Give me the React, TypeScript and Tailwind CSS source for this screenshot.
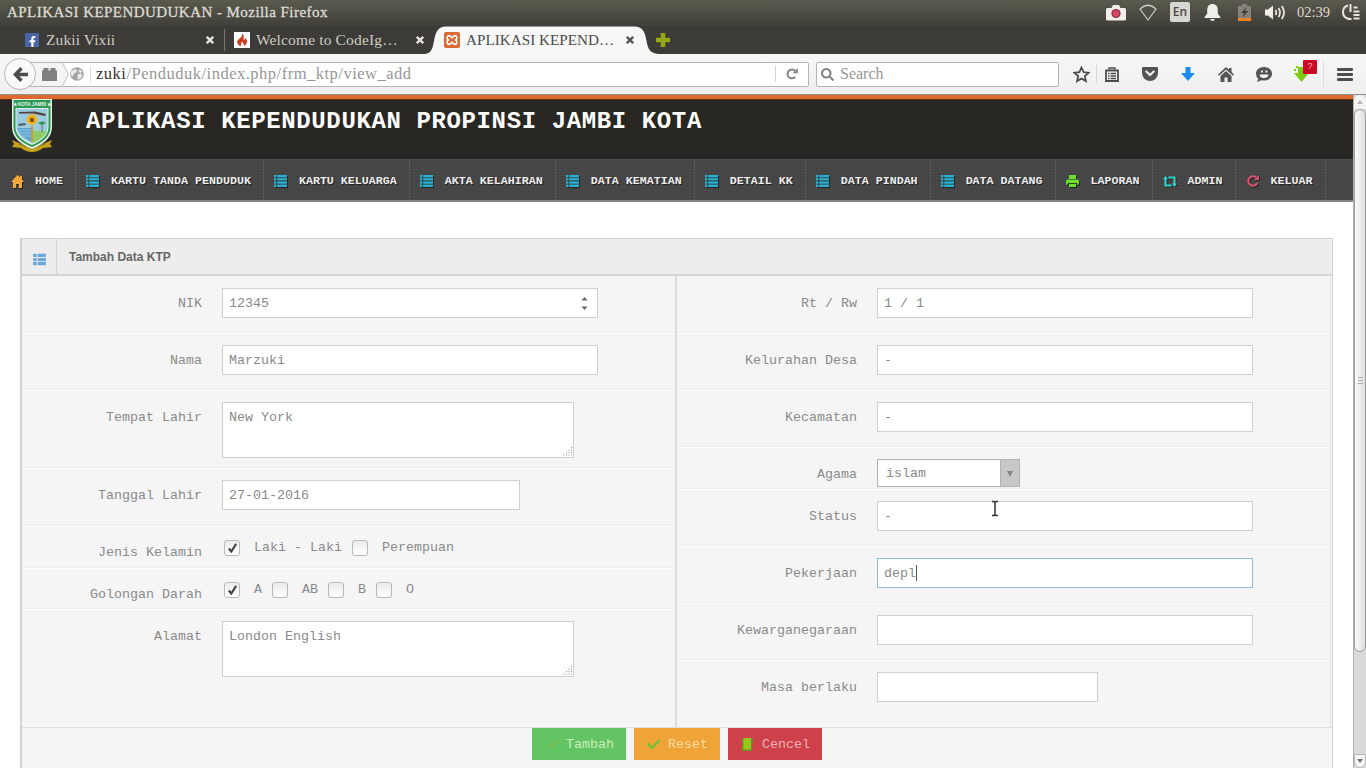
import type { ReactNode } from 'react';
import { FaThList, FaSearch, FaCheck, FaFacebookF } from 'react-icons/fa';

const serif = "font-['Liberation_Serif',serif]";

function CloseX({ className }: { className: string }) {
  return (
    <svg className={`h-[8px] w-[8px] shrink-0 ${className}`} viewBox="0 0 8 8" fill="none" stroke="currentColor" strokeWidth="2.3">
      <path d="M.8.8l6.4 6.4M7.2.8L.8 7.2" />
    </svg>
  );
}

function TitleBar() {
  return (
    <div className={`flex h-[26px] shrink-0 items-start bg-gradient-to-b from-[#5a5a4e] to-[#403f3a] pl-[7px] text-[#dfdbd2] ${serif}`}>
      <span className="text-[15px] leading-[24px] tracking-[0.45px] [-webkit-text-stroke:0.3px_#dfdbd2]">APLIKASI KEPENDUDUKAN - Mozilla Firefox</span>
      <div className="ml-auto flex h-[24px] items-center">
        <svg className="h-[17px] w-[20px]" viewBox="0 0 20 17">
          <path d="M1.500 4h4l1.500-3h6l1.500 3h4q1.500 0 1.500 1.500v9.500q0 1.500-1.500 1.500h-17q-1.500 0-1.500-1.500v-9.500q0-1.500 1.500-1.500z" fill="#f0eee9" />
          <circle cx="10" cy="9.500" r="4.600" fill="#8c3146" />
          <circle cx="10" cy="9.500" r="3.200" fill="#dc4665" />
        </svg>
        <svg className="ml-[13px] h-[17px] w-[18px]" viewBox="0 0 18 17" fill="none" stroke="#c9c7bf" strokeWidth="1.200">
          <path d="M1 5Q9-2.500 17 5L9 16z" />
        </svg>
        <span className="ml-[13px] flex h-[20px] w-[20px] items-center justify-center rounded-[2px] bg-[#d9d7d2] font-['Open_Sans',sans-serif] text-[12px] font-semibold text-[#4a4944]">En</span>
        <svg className="ml-[14px] h-[17px] w-[17px]" viewBox="0 0 17 17" fill="#f0eee9">
          <path d="M8.500 0C5 0 3.200 2.600 3.200 6v3.500L.5 13.300v.7h16v-.7l-2.700-3.800V6C13.800 2.600 12 0 8.500 0zM6 15h5q-1 2-2.500 2T6 15z" />
        </svg>
        <svg className="ml-[17px] h-[17px] w-[13px]" viewBox="0 0 13 17">
          <path d="M4 0h5v2h4v15H0V2h4z" fill="#85837a" />
          <path d="M0 14h13v3H0z" fill="#f08224" />
          <path d="M8.500 3L3 9h3l-1.500 4.500L10.500 7H7z" fill="#3f3d38" />
        </svg>
        <svg className="ml-[14px] h-[15px] w-[21px]" viewBox="0 0 21 15" fill="none" stroke="#e8e5de" strokeWidth="1.800">
          <path d="M0 4.500h3L8 .5v14l-5-4H0z" fill="#f0eee9" stroke="none" />
          <path d="M10.500 5q1.500 2.500 0 5M13.500 3q3 4.500 0 9M16.800 1q4.500 6.500 0 13" />
        </svg>
        <span className="ml-[11px] text-[14.500px] leading-[24px]">02:39</span>
        <svg className="mr-[6px] ml-[12px] h-[16px] w-[18px]" viewBox="0 0 18 16" fill="none" stroke="#e8e5de" strokeWidth="2">
          <path d="M6 1.500Q1 3 1 8t4.500 6.500q2 .8 4 .3M8.500 0v8M11.500 3.500h4M11.500 7.500h6M11.500 11h6M11.500 14.500h6" />
        </svg>
      </div>
    </div>
  );
}

function TabStrip() {
  return (
    <div className={`flex h-[28px] shrink-0 items-center bg-[#3c3b37] text-[15.500px] text-[#cfccc3] ${serif}`}>
      <div className="ml-[25px] flex h-[14px] w-[14px] items-end justify-center bg-[#4a64a8]">
        <FaFacebookF className="h-[11px] w-[9px] text-white" />
      </div>
      <span className="ml-[7px] w-[160px] tracking-[0.1px]">Zukii Vixii</span>
      <CloseX className="text-[#e8e5de]" />
      <div className="ml-[10px] h-[22px] w-px bg-[#77756d]" />
      <svg className="ml-[9px] h-[16px] w-[16px] bg-white" viewBox="0 0 16 16">
        <path d="M8 1.500q2.500 2 1.500 4.500-.5 1.500.8 2 1-.8.5-2.200Q14 8.500 12.800 11q-1 2.300-3.300 3.200 1-1.500-.2-2.700-.8-1-.6-2-2 1-1.700 2.700l-.2 2Q3.500 13 3.200 10.500 3 8.500 5.500 6.500 8.500 4.500 8 1.500z" fill="#cf3a20" />
      </svg>
      <span className="ml-[6px] w-[160px] tracking-[0.15px]">Welcome to CodeIg…</span>
      <CloseX className="text-[#e8e5de]" />
      <div className="relative h-[28px] w-[240px] text-[#4c4c4c]">
        <svg className="absolute inset-0 h-[28px] w-[236px]" viewBox="0 0 236 28" fill="#f7f7f7">
          <path d="M0 28C7 28 8.500 23 10 15C11.500 6 14 .5 22 .5H210C219 .5 221 6 222.500 15C224 23 226 28 236 28z" />
        </svg>
        <div className="relative flex h-[28px] items-center pl-[20px]">
          <svg className="h-[16px] w-[16px]" viewBox="0 0 16 16">
            <rect width="16" height="16" rx="2" fill="#d96a33" />
            <path d="M5.200 3.600C7 3.600 7 5.800 8 5.800S9 3.600 10.800 3.600C13.500 3.600 13.300 7 11.800 8c1.500 1 1.700 4.400-1 4.400C9 12.400 9 10.200 8 10.200S7 12.400 5.200 12.400C2.500 12.400 2.700 9 4.200 8 2.700 7 2.500 3.600 5.200 3.600z" fill="none" stroke="#fff" strokeWidth="1.600" />
          </svg>
          <span className="ml-[6px] w-[160px] text-[15.200px]">APLIKASI KEPEND…</span>
          <CloseX className="text-[#555]" />
        </div>
      </div>
      <svg className="-ml-[8px] h-[14px] w-[14px]" viewBox="0 0 14 14" fill="#93a70f">
        <path d="M4.700 0h4.600v4.700H14v4.600H9.300V14H4.700V9.300H0V4.700h4.700z" />
      </svg>
    </div>
  );
}

function Toolbar() {
  return (
    <div className={`flex h-[41px] shrink-0 items-center border-b border-[#8e8e8c] bg-gradient-to-b from-[#f7f7f7] to-[#efefee] text-[#5b5b5b] ${serif}`}>
      <div className="relative z-10 ml-[4px] flex h-[32px] w-[32px] shrink-0 items-center justify-center rounded-full border border-[#b5b5b3] bg-[#fafafa]">
        <svg className="h-[15px] w-[15px]" viewBox="0 0 15 15" fill="none" stroke="#4d4d4d" strokeWidth="3.400">
          <path d="M8.500 1.200L2.300 7.500l6.200 6.300M2.500 7.500H15" />
        </svg>
      </div>
      <div className="-ml-[8px] flex h-[25px] w-[781px] shrink-0 items-center rounded-r-[2px] border border-[#b4b4b2] bg-white">
        <div className="flex h-[23px] w-[32px] items-center bg-[#f4f4f4] pl-[13px]">
          <svg className="h-[13px] w-[15px]" viewBox="0 0 15 13" fill="#808080">
            <path d="M0 2.500h1.500V0h5v2.500h2V0h5v2.500H15V13H0z" />
          </svg>
        </div>
        <svg className="h-[23px] w-[9px]" viewBox="0 0 9 23">
          <path d="M0 0h1.500L7.500 11.500 1.500 23H0z" fill="#f4f4f4" />
          <path d="M1.500 0L7.500 11.500 1.500 23" fill="none" stroke="#c4c4c4" />
        </svg>
        <svg className="h-[14px] w-[14px]" viewBox="0 0 14 14">
          <circle cx="7" cy="7" r="6.800" fill="#a3a3a3" />
          <path d="M1 4.500l3.500-2.300 2.800.8-1 2.500-2.500 1L3 9.500l-2-1zM9 2.500l3.500 1.500-1.500 2-2-.8zM7.500 7.500l3-1 2 1.500-1.500 3-3 2-.5-3z" fill="#e9e9e9" />
        </svg>
        <div className="mx-[6px] h-[16px] w-px bg-[#dcdcdc]" />
        <span className="-ml-[1px] text-[16.500px] leading-[22px] tracking-[0.5px] text-[#979797]"><span className="text-[#333]">zuki</span>/Penduduk/index.php/frm_ktp/view_add</span>
        <div className="ml-auto h-[16px] w-px bg-[#d4d4d4]" />
        <svg className="mx-[10px] h-[12px] w-[12px]" viewBox="0 0 12 12" fill="none" stroke="#848484" strokeWidth="2">
          <path d="M9.300 8.800A4.400 4.400 0 1 1 9 2.800" />
          <path d="M11.800 0v5.300H6.500z" fill="#848484" stroke="none" />
        </svg>
      </div>
      <div className="ml-[7px] flex h-[25px] w-[243px] shrink-0 items-center rounded-[2px] border border-[#b4b4b2] bg-white pl-[4px]">
        <FaSearch className="h-[13px] w-[13px] text-[#858585]" />
        <span className="ml-[6px] text-[16px] leading-[22px] text-[#979797]">Search</span>
      </div>
      <svg className="ml-[14px] h-[17px] w-[17px]" viewBox="0 0 17 17" fill="none" stroke="#4d4d4d" strokeWidth="1.800">
        <path d="M8.500 1.500l2.100 4.700 5 .5-3.800 3.400 1.100 5-4.400-2.600-4.400 2.600 1.100-5L1.400 6.700l5-.5z" />
      </svg>
      <div className="ml-[6px] h-[18px] w-px bg-[#d6d6d5]" />
      <svg className="ml-[8px] h-[15px] w-[14px]" viewBox="0 0 14 15" fill="none" stroke="#4d4d4d" strokeWidth="1.800">
        <path d="M1 3.500h12v10.500H1z" /><path d="M4 3V1h6v2M3 6.500h1.500M5.500 6.500H11M3 9h1.500M5.500 9H11M3 11.500h1.500M5.500 11.500H11" strokeWidth="1.300" />
      </svg>
      <svg className="ml-[23px] h-[14px] w-[16px]" viewBox="0 0 16 14">
        <path d="M1 0h14q1 0 1 1v5a8 8 0 0 1-16 0V1q0-1 1-1z" fill="#545454" />
        <path d="M4.300 4.500L8 8l3.700-3.500" fill="none" stroke="#f4f4f4" strokeWidth="2" strokeLinecap="round" />
      </svg>
      <svg className="ml-[23px] h-[14px] w-[14px]" viewBox="0 0 14 14" fill="#1d8cf2">
        <path d="M4.500 0h5v6H14l-7 8-7-8h4.500z" />
      </svg>
      <svg className="ml-[23px] h-[15px] w-[16px]" viewBox="0 0 16 15" fill="#555">
        <path d="M8 0l3 2.800V1h2.500v4L16 7.500 15 8.800 8 2.500 1 8.800 0 7.500z" /><path d="M8 4l5.500 5v6h-4v-4.500h-3V15h-4V9z" />
      </svg>
      <svg className="ml-[22px] h-[15px] w-[16px]" viewBox="0 0 16 15">
        <path d="M8 0c4.500 0 8 2.800 8 6.700s-3.500 6.800-8 6.800q-1.500 0-2.700-.3L1 15l1.300-3.300Q0 9.800 0 6.700C0 2.800 3.500 0 8 0z" fill="#545454" />
        <path d="M3.500 7.500h9Q12 11 8 11T3.500 7.500zM5 3.500h1.800v2H5zM9.500 3.500h1.800v2H9.500z" fill="#f4f4f4" />
      </svg>
      <div className="relative ml-[22px] h-[16px] w-[15px]">
        <svg className="h-[16px] w-[15px]" viewBox="0 0 15 16" fill="#7ecb12">
          <path d="M4 1h7v6h4l-7.500 9L0 7h4z" /><path d="M0 3h2v2H0zM2 0h2v2H2z" />
        </svg>
        <span className="absolute -top-[6px] left-[9px] flex h-[14px] w-[14px] items-center justify-center rounded-[1px] bg-[#c90a22] font-['Liberation_Sans',sans-serif] text-[9px] text-[#f3b7bd]">?</span>
      </div>
      <div className="ml-[14px] h-[28px] w-px bg-[#dededd]" />
      <svg className="ml-[13px] h-[13px] w-[16px]" viewBox="0 0 16 13" fill="#4d4d4d">
        <rect width="16" height="3" rx="1" /><rect y="5" width="16" height="3" rx="1" /><rect y="10" width="16" height="3" rx="1" />
      </svg>
    </div>
  );
}

function CityCrest() {
  return (
    <svg className="h-[54px] w-[42px]" viewBox="0 0 42 54">
      <path d="M1 41l7 3 13 6 13-6 7-3-2 4 2 3-9 1q-5 4-11 4t-11-4l-9-1 2-3z" fill="#c6a21b" />
      <path d="M8 45q13 7 26 0" fill="none" stroke="#8d7210" />
      <path d="M1 0h40v28q0 14-20 22Q1 42 1 28z" fill="#e9f3e9" />
      <path d="M2.500 1h37v27q0 12.500-18.500 20Q2.500 40.500 2.500 28z" fill="#2c9a55" />
      <path d="M4.500 9h33v19q0 11-16.500 18Q4.500 39 4.500 28z" fill="#e3efe6" />
      <path d="M5.500 10h31v18q0 10-15.500 16.500Q5.500 38 5.500 28z" fill="#9ccbdf" />
      <path d="M21 32h15q-2 7-15 12.500z" fill="#8fca6b" />
      <path d="M6 29h15v14Q8 37 6 29z" fill="#5ba5d2" />
      <path d="M7 31h13M8 34h12M10 37h10" stroke="#a7d4ec" strokeWidth=".8" />
      <circle cx="21" cy="20.500" r="5.300" fill="#efb321" />
      <circle cx="21" cy="21" r="2.200" fill="#7d4d16" />
      <path d="M8 13l16-.5 11 2.500-1 2-12-2.500L8 14.500z" fill="#54403c" />
      <path d="M21 27v15" stroke="#d29a29" strokeWidth="1.800" />
      <path d="M7 25l7-1 1 2-7 1z" fill="#4d5c66" />
      <path d="M31 24v9" stroke="#54745a" />
      <path d="M27 24q4-3 8 0l-4 2z" fill="#2f9455" />
      <text x="21" y="7" textAnchor="middle" fill="#e8f7eb" fontFamily="Liberation Sans" fontSize="4.600" fontWeight="bold">★ KOTA JAMBI ★</text>
    </svg>
  );
}

function SiteHeader() {
  return (
    <div className="flex h-[64px] shrink-0 border-t-[4px] border-[#dd6a2c] bg-[#292724] pl-[11px] shadow-[inset_0_1px_0_#5e2d14]">
      <CityCrest />
      <h1 className="ml-[33px] mt-[8px] text-[24px] leading-[30px] font-bold tracking-[0.62px] whitespace-nowrap text-white">APLIKASI KEPENDUDUKAN PROPINSI JAMBI KOTA</h1>
    </div>
  );
}

const listIcon = (
  <svg className="h-[12px] w-[13px] text-[#2bb2d3]" viewBox="0 0 13 12" fill="currentColor">
    <path d="M0 0h2.500v2.400H0zM0 3.200h2.500v2.400H0zM0 6.400h2.500v2.400H0zM0 9.600h2.500V12H0zM3.300 0H13v2.400H3.300zM3.300 3.200H13v2.400H3.300zM3.300 6.400H13v2.400H3.300zM3.300 9.600H13V12H3.300z" />
  </svg>
);
const homeIcon = (
  <svg className="h-[13px] w-[13px]" viewBox="0 0 13 13" fill="#f6a73b">
    <path d="M6.500 0L9 2.300V1h2v3.200L13 7h-2v6H7.800V9H5.200v4H2V7H0z" />
  </svg>
);
const printIcon = (
  <svg className="h-[12px] w-[13px]" viewBox="0 0 13 12" fill="#6ddc2c">
    <path d="M3 0h7v4H3z" /><path d="M1.500 4.500h10Q13 4.500 13 6v3.500h-2V8H2v1.500H0V6q0-1.500 1.500-1.500z" /><path d="M3 8.800h7V12H3z" />
  </svg>
);
const cycleIcon = (
  <svg className="h-[11px] w-[14px]" viewBox="0 0 14 11" fill="#2fd6d2">
    <path d="M2.500 0L5 3.300H3.500v5.200h5V10.500H1.500V3.300H0zM5.500.5h7V7.500H14L11.500 11 9 7.500h1.500v-5h-5z" />
  </svg>
);
const reloadIcon = (
  <svg className="h-[12px] w-[12px]" viewBox="0 0 12 12" fill="none" stroke="#d5546f" strokeWidth="2.100">
    <path d="M10.300 8A4.700 4.700 0 1 1 9.300 2.600" /><path d="M12 0v5H7z" fill="#d5546f" stroke="none" />
  </svg>
);
const navItems: { label: string; icon: ReactNode }[] = [
  { label: 'HOME', icon: homeIcon },
  { label: 'KARTU TANDA PENDUDUK', icon: listIcon },
  { label: 'KARTU KELUARGA', icon: listIcon },
  { label: 'AKTA KELAHIRAN', icon: listIcon },
  { label: 'DATA KEMATIAN', icon: listIcon },
  { label: 'DETAIL KK', icon: listIcon },
  { label: 'DATA PINDAH', icon: listIcon },
  { label: 'DATA DATANG', icon: listIcon },
  { label: 'LAPORAN', icon: printIcon },
  { label: 'ADMIN', icon: cycleIcon },
  { label: 'KELUAR', icon: reloadIcon },
];

function MainNav() {
  return (
    <nav className="flex h-[43px] shrink-0 border-t border-b-2 border-t-[#505050] border-b-[#858585] bg-[#454545] bg-[repeating-linear-gradient(0deg,rgba(255,255,255,0.025)_0px,rgba(255,255,255,0.025)_1px,transparent_1px,transparent_3px)]">
      {navItems.map((item) => (
        <a key={item.label} className="flex h-[40px] shrink-0 border-r border-dotted border-[#636363] pr-[12px] pl-[10px]">
          <span className="mt-[14px] flex h-[14px] w-[14px] shrink-0 items-center justify-center drop-shadow-[1px_1px_0_#222]">{item.icon}</span>
          <span className="ml-[11px] pt-[13px] text-[11.667px] leading-[16px] font-bold whitespace-nowrap text-[#ededed] [text-shadow:1px_1px_0_#222]">{item.label}</span>
        </a>
      ))}
    </nav>
  );
}

function Row({ label, height, labelTop, last, children }: { label: string; height: string; labelTop?: string; last?: boolean; children: ReactNode }) {
  return (
    <div className={`flex shrink-0 pt-[11px] ${height} ${last ? '' : 'border-b border-white shadow-[inset_0_-1px_0_#efefef]'}`}>
      <label className={`w-[180px] shrink-0 text-right leading-[18px] ${labelTop ?? 'pt-[7px]'}`}>{label}</label>
      <div className="ml-[20px] flex items-start">{children}</div>
    </div>
  );
}

function Field({ value = '', width = 'w-[376px]', focused, spinner }: { value?: string; width?: string; focused?: boolean; spinner?: boolean }) {
  return (
    <div className={`flex h-[30px] items-center border bg-white px-[6px] ${width} ${focused ? 'border-[#8fbfdc]' : 'border-[#cfcfcf]'}`}>
      <span className="pt-[2px] leading-[18px]">{value}</span>
      {focused && <span className="h-[16px] w-px bg-[#555]" />}
      {spinner && (
        <svg className="mr-[3px] ml-auto h-[13px] w-[7px]" viewBox="0 0 7 13" fill="#666">
          <path d="M3.500 0L6.500 3.500h-6zM3.500 13L6.500 9.500h-6z" />
        </svg>
      )}
    </div>
  );
}

function Area({ value }: { value: string }) {
  return (
    <div className="flex h-[56px] w-[352px] justify-between border border-[#cfcfcf] bg-white pt-[6px] pl-[6px]">
      <span className="leading-[18px]">{value}</span>
      <svg className="h-[10px] w-[11px] self-end" viewBox="0 0 11 10" stroke="#999" strokeDasharray="1 1.500">
        <path d="M9.500 0v10M7 2.500v7.500M4.500 5v5M2 7.500V10" />
      </svg>
    </div>
  );
}

function Check({ label, checked, gap }: { label: string; checked?: boolean; gap: string }) {
  return (
    <span className={`flex items-start ${gap}`}>
      <span className="mt-[2px] flex h-[16px] w-[16px] items-center justify-center rounded-[3px] border border-[#b9b9b9] bg-gradient-to-b from-[#ececec] to-white">
        {checked && (
          <svg className="h-[10px] w-[9px]" viewBox="0 0 9 10" fill="none" stroke="#444" strokeWidth="2.200">
            <path d="M.8 5.500L3.300 8.500 8.200.8" />
          </svg>
        )}
      </span>
      <span className="ml-[14px] pt-px leading-[18px]">{label}</span>
    </span>
  );
}

function FormPanel() {
  return (
    <div className="mt-[36px] ml-[20px] flex h-[560px] w-[1313px] shrink-0 flex-col border-[#d2d2d2] bg-[#f5f5f5] text-[13.333px] text-[#8a8a8a] [border-width:1px_1px_1px_2px]">
      <div className="flex h-[37px] shrink-0 border-b-2 border-[#d5d5d5] bg-[#ededed]">
        <div className="flex w-[35px] items-center justify-center border-r border-[#d5d5d5] pt-[6px]">
          <FaThList className="h-[13px] w-[13px] text-[#6ea8da]" />
        </div>
        <h2 className="ml-[12px] pt-[10px] font-['Liberation_Sans',sans-serif] text-[12px] leading-[16px] font-bold text-[#666]">Tambah Data KTP</h2>
      </div>
      <div className="flex h-[452px] shrink-0 border-b border-[#dedede]">
        <div className="flex w-[655px] flex-col border-r-2 border-[#dcdcdc] pt-px">
          <Row label="NIK" height="h-[57px]"><Field value="12345" spinner /></Row>
          <Row label="Nama" height="h-[57px]"><Field value="Marzuki" /></Row>
          <Row label="Tempat Lahir" height="h-[78px]"><Area value="New York" /></Row>
          <Row label="Tanggal Lahir" height="h-[58px]"><Field value="27-01-2016" width="w-[298px]" /></Row>
          <Row label="Jenis Kelamin" height="h-[42px]" labelTop="pt-[6px]">
            <Check label="Laki - Laki" checked gap="ml-[2px]" />
            <Check label="Perempuan" gap="ml-[10px]" />
          </Row>
          <Row label="Golongan Darah" height="h-[41px]" labelTop="pt-[6px]">
            <Check label="A" checked gap="ml-[2px]" />
            <Check label="AB" gap="ml-[10px]" />
            <Check label="B" gap="ml-[10px]" />
            <Check label="O" gap="ml-[10px]" />
          </Row>
          <Row label="Alamat" height="h-[117px]" last><Area value="London English" /></Row>
        </div>
        <div className="flex w-[654px] flex-col border-r border-[#e2e2e2] pt-px">
          <Row label="Rt / Rw" height="h-[57px]"><Field value="1 / 1" /></Row>
          <Row label="Kelurahan Desa" height="h-[57px]"><Field value="-" /></Row>
          <Row label="Kecamatan" height="h-[57px]"><Field value="-" /></Row>
          <Row label="Agama" height="h-[42px]">
            <div className="flex h-[28px] w-[143px] border border-[#b3b3b3] bg-white">
              <span className="grow pl-[8px] leading-[28px]">islam</span>
              <span className="flex w-[19px] items-center justify-center border-l border-[#b3b3b3] bg-[#c8c8c8]">
                <svg className="mt-[2px] h-[6px] w-[6px]" viewBox="0 0 6 6" fill="#838383"><path d="M0 0h6L3 6z" /></svg>
              </span>
            </div>
          </Row>
          <Row label="Status" height="h-[57px]">
            <div className="relative">
              <Field value="-" />
              <svg className="absolute top-[-1px] left-[114px] h-[17px] w-[8px]" viewBox="0 0 8 17" fill="none">
                <path d="M1 1.500h2l1 1 1-1h2M4 2v13M1 15.500h2l1-1 1 1h2" stroke="#333" strokeWidth="1.500" />
              </svg>
            </div>
          </Row>
          <Row label="Pekerjaan" height="h-[57px]"><Field value="depl" focused /></Row>
          <Row label="Kewarganegaraan" height="h-[57px]"><Field /></Row>
          <Row label="Masa berlaku" height="h-[66px]" last><Field width="w-[221px]" /></Row>
        </div>
      </div>
      <div className="flex gap-[8px] pl-[510px]">
        <button className="flex h-[32px] w-[94px] items-center bg-[#62c462] pl-[15px] text-[#cdecbb]">
          <FaCheck className="h-[11px] w-[10px] text-[#7cbb4c]" /><span className="ml-[9px] pt-[2px]">Tambah</span>
        </button>
        <button className="flex h-[32px] w-[86px] items-center bg-[#f0a437] pl-[13px] text-[#f9dca5]">
          <FaCheck className="h-[13px] w-[13px] text-[#78bf35]" /><span className="ml-[8px] pt-[2px]">Reset</span>
        </button>
        <button className="flex h-[32px] w-[94px] items-center bg-[#ce404a] pl-[13px] text-[#f0b5b9]">
          <svg className="h-[13px] w-[13px]" viewBox="0 0 13 13">
            <path d="M1.500 0H12l-1 13H.5z" fill="#6f8f1c" /><path d="M2.500 0H10v11.500H2.500z" fill="#98c71e" />
          </svg>
          <span className="ml-[8px] pt-[2px]">Cencel</span>
        </button>
      </div>
    </div>
  );
}

function Scrollbar() {
  return (
    <div className="flex w-[13px] shrink-0 flex-col items-center border-l border-[#b0b0b0] bg-[#d9d9d8]">
      <div className="flex h-[14px] w-full items-center justify-center rounded-t-full bg-[#f3f3f3]">
        <svg className="h-[4px] w-[6px]" viewBox="0 0 6 4" fill="#b5b5b5"><path d="M3 0l3 4H0z" /></svg>
      </div>
      <div className="flex h-[543px] w-full flex-col items-center justify-center gap-[2px] rounded-[6px] border border-[#9d9d9d] bg-gradient-to-r from-[#fafafa] to-[#dfdfde]">
        <div className="h-px w-[5px] bg-[#aaa]" /><div className="h-px w-[5px] bg-[#aaa]" /><div className="h-px w-[5px] bg-[#aaa]" />
      </div>
      <div className="grow" />
      <div className="flex h-[14px] w-full items-center justify-center rounded-b-full border border-[#b5b5b5] bg-[#f5f5f5]">
        <svg className="h-[4px] w-[6px]" viewBox="0 0 6 4" fill="#777"><path d="M3 4L0 0h6z" /></svg>
      </div>
    </div>
  );
}

export default function App() {
  return (
    <div className="flex h-[768px] w-[1366px] flex-col overflow-hidden bg-white">
      <TitleBar />
      <TabStrip />
      <Toolbar />
      <div className="flex h-[673px] shrink-0">
        <div className="flex h-[673px] w-[1353px] flex-col overflow-hidden font-['Liberation_Mono','Courier_New',monospace]">
          <SiteHeader />
          <MainNav />
          <FormPanel />
        </div>
        <Scrollbar />
      </div>
    </div>
  );
}
